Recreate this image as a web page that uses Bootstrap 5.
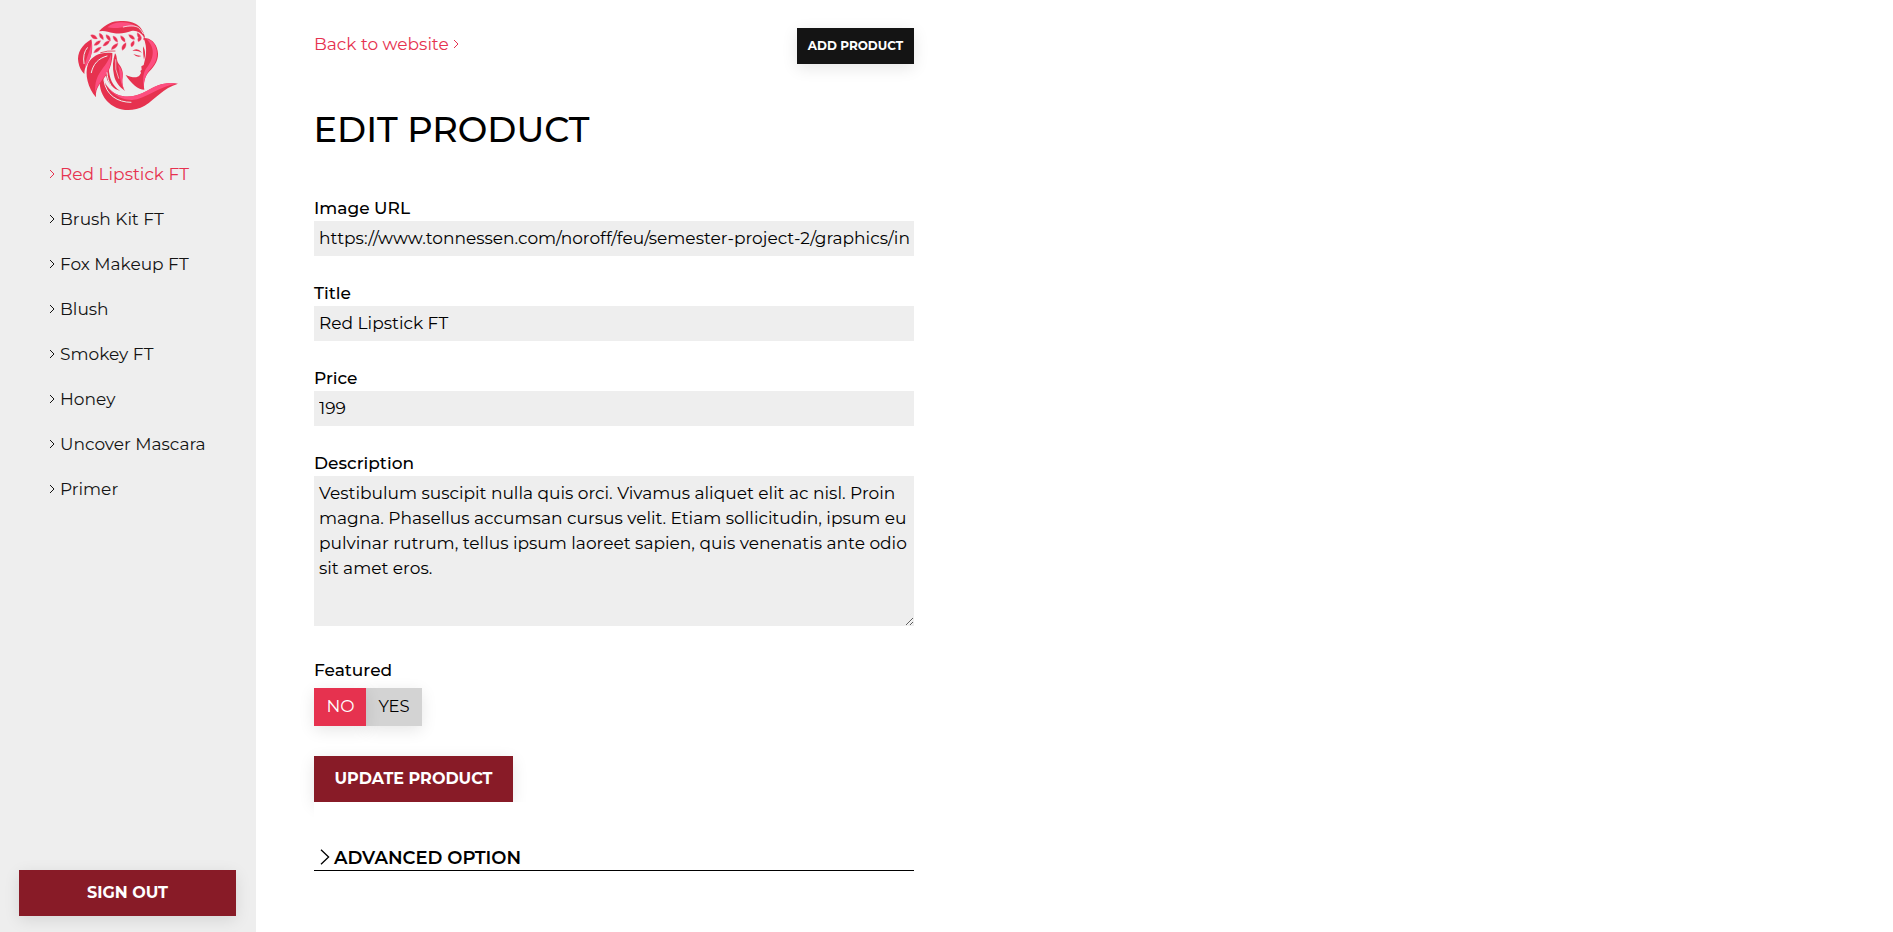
<!DOCTYPE html>
<html lang="en">
<head>
<meta charset="utf-8">
<meta name="viewport" content="width=device-width, initial-scale=1">
<title>Edit product</title>
<link href="https://cdn.jsdelivr.net/npm/bootstrap@5.3.0/dist/css/bootstrap.min.css" rel="stylesheet">
<style>
  body { font-family: "Montserrat", "Inter", sans-serif; font-size: 17px; line-height: 25px; color: #000; background: #fff; }
  .sidebar { width: 256px; background: #eee; padding: 16px 20px 16px 19px; }
  .brand-logo { width: 140px; height: 120px; margin: -11px 0 0 41px; }
  .product-nav { margin: 37px 0 0 30px; gap: 20px; }
  .product-nav a { color: #141414; gap: 5px; height: 25px; white-space: nowrap; }
  .product-nav a.current, .back-link { color: #e6324f; }
  .chev { width: 6px; height: 10px; fill: none; stroke: currentColor; stroke-width: 1; flex: none; }
  .product-nav .chev { margin-top: -2px; }
  .btn { border: 0; border-radius: 0; }
  .raised { box-shadow: 0 4px 16px rgba(0, 0, 0, .1); }
  .btn-wine, .btn-wine:hover { background: #881b27; color: #fff; height: 46px; padding: 0 0 1px; font-size: 16px; line-height: 45px; font-weight: 700; }
  .btn-dark-add, .btn-dark-add:hover { background: #141414; color: #fff; width: 117px; height: 36px; padding: 0; font-size: 12px; line-height: 36px; font-weight: 700; }
  .editor { width: 600px; margin-left: 58px; padding-top: 28px; }
  .back-link { gap: 4px; height: 32px; }
  h1 { font-size: 35.2px; line-height: 42px; font-weight: 500; margin: 45px 0 0 -.5px; }
  .field label, .field-name { display: block; font-weight: 500; height: 25px; }
  .form-control, .form-control:focus { border: 0; border-radius: 0; background: #eee; color: #000; padding: 0 3px 1px 5px; font-size: 17.03px; line-height: 25px; height: 35px; }
  textarea.form-control { height: 150px; padding: 5px; resize: both; overflow: auto; }
  .first-field { margin-top: 45px; }
  .field + .field { margin-top: 25px; }
  .featured { margin-top: 32px; }
  .featured .field-name { height: 30px; }
  .toggle-no { background: #e6324f; color: #fff; width: 52px; padding-left: 1px; z-index: 1; }
  .toggle-yes { background: #d3d3d3; width: 56px; font-size: 16.4px; }
  .toggle-no, .toggle-yes { height: 38px; line-height: 37px; text-align: center; position: relative; }
  .btn-update { display: block; width: 199px; margin-top: 30px; }
  .advanced { background: #fff; height: 69px; padding: 43px 0 0 6px; border-bottom: 1px solid #000; font-weight: 600; font-size: 18px; position: relative; }
  .advanced span { padding-top: 1px; }
  .chev-lg { width: 10px; height: 16px; margin: 4px 4px 0 0; fill: none; stroke: currentColor; stroke-width: 1.3; }
</style>
</head>
<body>
<div class="d-flex min-vh-100">
  <aside class="sidebar d-flex flex-column flex-shrink-0 vh-100">
    <svg class="brand-logo flex-shrink-0" viewBox="0 0 420 360" aria-label="Logo">
      <g fill="#e6324f">
        <path d="M117 79C137 56 160 47 185 48C213 46 237 57 246 75C252 85 254 92 254 98C242 82 229 75 214 78C190 88 166 87 143 80Q130 76 117 79Z"/>
        <path d="M94 103C66 119 50 145 55 171C58 187 63 197 73 207C73 187 82 174 91 158C98 142 98 120 94 103Z"/>
        <path d="M157 144C125 139 96 151 84 176C73 208 84 249 108 277C105 247 125 231 139 210C151 192 158 166 157 144Z"/>
        <path d="M251 99C270 98 288 112 293 137C298 161 286 182 267 200C253 216 250 236 253 254C235 254 214 237 197 210C216 217 230 221 239 211L243 204L241 198L245 194L244 184L251 180C257 157 264 132 251 99Z"/>
        <path d="M121 208C115 238 122 267 140 287C166 316 212 325 254 302C289 280 309 249 354 236C316 229 288 242 262 257C218 282 174 280 148 251C132 233 127 219 128 204Z"/>
        <path d="M165 145C172 151 168 166 177 178C190 194 190 209 187 225Q186 244 195 258C178 246 166 231 162 211C157 188 158 167 165 145Z"/>
        <path d="M146 190C148 218 156 243 181 258Q143 247 137 208Z"/>
        <path d="M217 138Q231 126 246 143Q231 135 217 138Z"/>
        <path d="M220 147Q231 159 244 153Q232 152 220 147Z"/>
        <path d="M249 124Q260 140 252 164Q249 149 249 124Z"/>
      </g>
      <g fill="#fd4f80">
        <path d="M142 67C171 74 195 61 231 65Q208 51 182 52Q157 54 142 67Z"/>
        <path d="M94 105C96 133 75 159 75 188C90 167 101 140 94 105Z"/>
        <path d="M153 148C137 192 102 204 106 262C111 239 132 221 144 198Q155 174 153 148Z"/>
        <path d="M260 103C292 134 276 169 259 190C249 203 248 224 251 248C252 216 262 202 278 184C296 163 296 127 275 108Q268 103 260 103Z"/>
        <path d="M128 211C138 260 179 286 216 285C257 281 292 246 350 236C314 229 285 243 258 259C217 282 174 280 148 252Q132 233 128 211Z"/>
        <path d="M174 180C181 204 177 225 191 251Q184 232 188 211Q186 190 174 180Z"/>
      </g>
      <!-- laurel leaves -->
      <g fill="#e6324f" stroke="#fd4f80" stroke-width="1.2">
        <path d="M92 90Q106 87 112 101Q97 105 92 90Z"/>
        <path d="M118 85Q131 88 130 104Q116 99 118 85ZM138 89Q153 91 151 108Q138 102 138 89ZM159 93Q173 96 173 112Q159 106 159 93ZM182 92Q197 96 195 111Q181 105 182 92ZM206 89Q222 89 224 103Q210 103 206 89ZM232 83Q246 89 242 104Q230 97 232 83Z"/>
        <path d="M122 107Q117 122 102 121Q107 107 122 107ZM149 107Q145 122 129 123Q133 108 149 107ZM174 115Q171 131 154 134Q156 119 174 115ZM198 113Q200 129 187 136Q181 122 198 113ZM222 107Q226 119 215 126Q207 115 222 107ZM243 94Q247 106 235 110Q229 99 243 94ZM124 126Q117 143 101 143Q108 127 124 126Z"/>
      </g>
      <g fill="none" stroke="#e6324f" stroke-width="2.5" stroke-linecap="round">
        <path d="M122 143Q143 136 165 138"/>
        <path d="M250 88Q255 96 252 104"/>
      </g>
      <g fill="none" stroke="#eee" stroke-linecap="round">
        <path d="M190 66C206 62 222 60 236 68Q244 76 250 86" stroke-width="2.5"/>
        <path d="M82 128Q67 145 72 176" stroke-width="3"/>
        <path d="M141 153C114 160 99 178 94 203" stroke-width="3"/>
        <path d="M141 203C142 231 157 255 181 266" stroke-width="3"/>
        <path d="M132 227C138 270 172 292 213 292" stroke-width="3"/>
        <path d="M167 164Q163 193 176 220" stroke-width="2"/>
      </g>
    </svg>
    <nav class="product-nav nav flex-column">
      <a href="#" class="current d-flex align-items-center text-decoration-none"><svg class="chev" viewBox="0 0 6 10"><path d="M1 1l4 4-4 4"/></svg><span>Red Lipstick FT</span></a>
      <a href="#" class="d-flex align-items-center text-decoration-none"><svg class="chev" viewBox="0 0 6 10"><path d="M1 1l4 4-4 4"/></svg><span>Brush Kit FT</span></a>
      <a href="#" class="d-flex align-items-center text-decoration-none"><svg class="chev" viewBox="0 0 6 10"><path d="M1 1l4 4-4 4"/></svg><span>Fox Makeup FT</span></a>
      <a href="#" class="d-flex align-items-center text-decoration-none"><svg class="chev" viewBox="0 0 6 10"><path d="M1 1l4 4-4 4"/></svg><span>Blush</span></a>
      <a href="#" class="d-flex align-items-center text-decoration-none"><svg class="chev" viewBox="0 0 6 10"><path d="M1 1l4 4-4 4"/></svg><span>Smokey FT</span></a>
      <a href="#" class="d-flex align-items-center text-decoration-none"><svg class="chev" viewBox="0 0 6 10"><path d="M1 1l4 4-4 4"/></svg><span>Honey</span></a>
      <a href="#" class="d-flex align-items-center text-decoration-none"><svg class="chev" viewBox="0 0 6 10"><path d="M1 1l4 4-4 4"/></svg><span>Uncover Mascara</span></a>
      <a href="#" class="d-flex align-items-center text-decoration-none"><svg class="chev" viewBox="0 0 6 10"><path d="M1 1l4 4-4 4"/></svg><span>Primer</span></a>
    </nav>
    <button class="btn btn-wine raised w-100 mt-auto">SIGN OUT</button>
  </aside>
  <main class="editor flex-shrink-0">
    <div class="d-flex justify-content-between">
      <a href="#" class="back-link d-flex align-items-center text-decoration-none"><span>Back to website</span><svg class="chev" viewBox="0 0 6 10"><path d="M1 1l4 4-4 4"/></svg></a>
      <button class="btn btn-dark-add raised">ADD PRODUCT</button>
    </div>
    <h1>EDIT PRODUCT</h1>
    <form>
      <div class="field first-field">
        <label for="image-url">Image URL</label>
        <input class="form-control" id="image-url" value="https://www.tonnessen.com/noroff/feu/semester-project-2/graphics/in">
      </div>
      <div class="field">
        <label for="title">Title</label>
        <input class="form-control" id="title" value="Red Lipstick FT">
      </div>
      <div class="field">
        <label for="price">Price</label>
        <input class="form-control" id="price" value="199">
      </div>
      <div class="field">
        <label for="description">Description</label>
        <textarea class="form-control" id="description">Vestibulum suscipit nulla quis orci. Vivamus aliquet elit ac nisl. Proin magna. Phasellus accumsan cursus velit. Etiam sollicitudin, ipsum eu pulvinar rutrum, tellus ipsum laoreet sapien, quis venenatis ante odio sit amet eros.</textarea>
      </div>
      <div class="featured">
        <span class="field-name">Featured</span>
        <div class="d-flex">
          <span class="toggle-no raised">NO</span>
          <span class="toggle-yes raised">YES</span>
        </div>
      </div>
      <button type="button" class="btn btn-wine btn-update raised">UPDATE PRODUCT</button>
    </form>
    <section class="advanced d-flex align-items-start"><svg class="chev-lg" viewBox="0 0 10 16"><path d="M1 .8l7.6 7.2L1 15.2"/></svg><span>ADVANCED OPTION</span></section>
  </main>
</div>
<script src="https://cdn.jsdelivr.net/npm/bootstrap@5.3.0/dist/js/bootstrap.bundle.min.js"></script>
</body>
</html>
